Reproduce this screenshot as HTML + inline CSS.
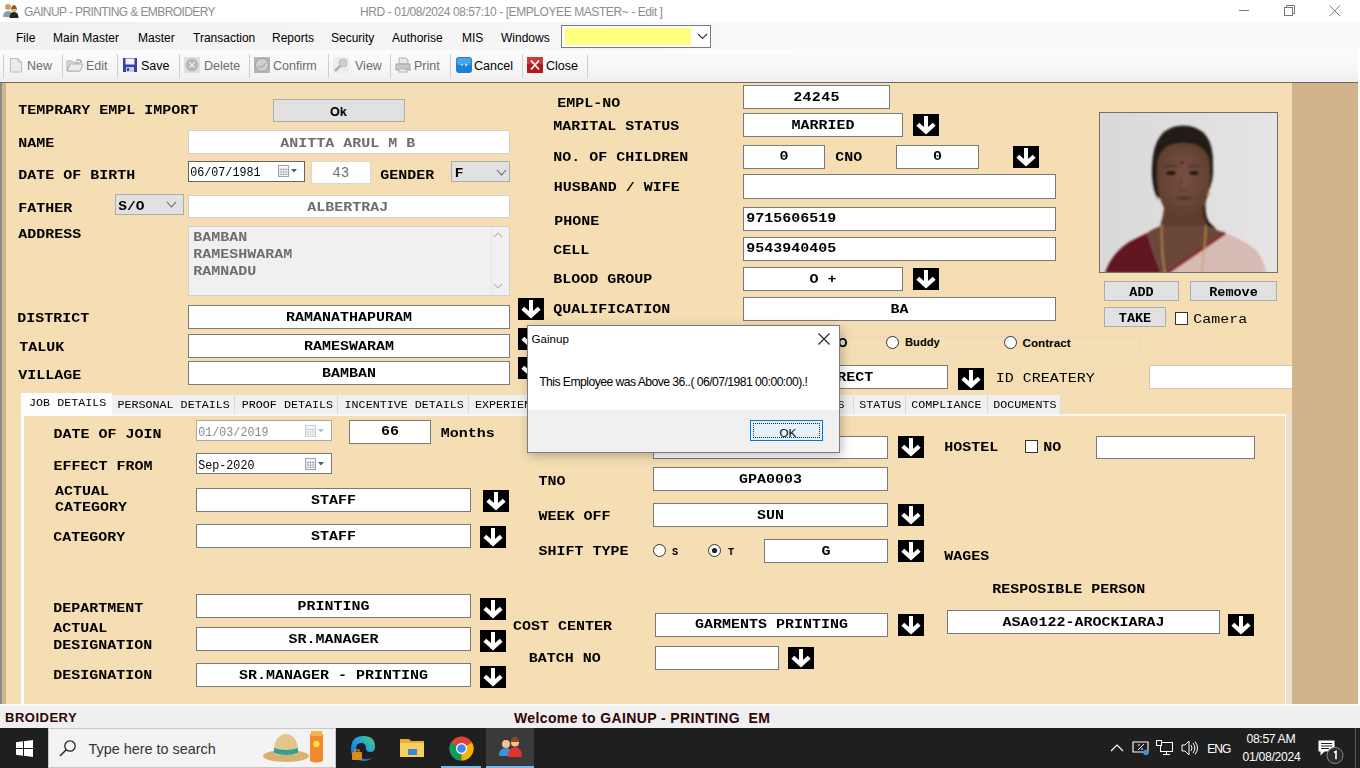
<!DOCTYPE html>
<html><head><meta charset="utf-8">
<style>
*{margin:0;padding:0;box-sizing:border-box}
html,body{width:1360px;height:768px;overflow:hidden;background:#fff;position:relative;font-family:"Liberation Sans",sans-serif}
.a{position:absolute}
.t{position:absolute;white-space:pre;line-height:1}
.ui{font-family:"Liberation Sans",sans-serif;font-size:12px}
.lb{position:absolute;white-space:pre;line-height:1;font-family:"Liberation Mono",monospace;font-weight:bold;font-size:15px;color:#000}
.in{position:absolute;background:#fff;border:1px solid #7a7a7a;white-space:pre;font-family:"Liberation Mono",monospace;font-weight:bold;font-size:13px;text-align:center;color:#000;overflow:hidden}
.arr{position:absolute;width:26px;height:22px;background:#000}
.arr svg{display:block}
.sep{position:absolute;top:54px;width:1px;height:24px;background:#d0d0d0}
</style></head><body>

<!-- title bar -->
<div class="a" style="left:0;top:0;width:1360px;height:22px;background:#fff"></div>
<div class="t ui" style="left:24px;top:6px;color:#8c8c8c;font-size:12px;letter-spacing:-0.6px">GAINUP - PRINTING &amp; EMBROIDERY</div>
<div class="t ui" style="left:360px;top:6px;color:#8c8c8c;font-size:12px;letter-spacing:-0.42px">HRD - 01/08/2024 08:57:10 - [EMPLOYEE MASTER~ - Edit ]</div>

<!-- menu bar -->
<div class="a" style="left:0;top:22px;width:1360px;height:28px;background:linear-gradient(90deg,#f1f1f1,#f9f9f9 60%,#fafafa)"></div>
<div class="t ui" style="left:16px;top:31.5px;color:#000">File</div>
<div class="t ui" style="left:53px;top:31.5px;color:#000">Main Master</div>
<div class="t ui" style="left:138px;top:31.5px;color:#000">Master</div>
<div class="t ui" style="left:193px;top:31.5px;color:#000">Transaction</div>
<div class="t ui" style="left:272px;top:31.5px;color:#000">Reports</div>
<div class="t ui" style="left:331px;top:31.5px;color:#000">Security</div>
<div class="t ui" style="left:392px;top:31.5px;color:#000">Authorise</div>
<div class="t ui" style="left:462px;top:31.5px;color:#000">MIS</div>
<div class="t ui" style="left:501px;top:31.5px;color:#000">Windows</div>
<div class="a" style="left:561px;top:25px;width:150px;height:23px;background:#fff;border:1px solid #7a7a7a"></div>
<div class="a" style="left:565px;top:28px;width:126px;height:17px;background:#ffff80"></div>
<svg class="a" style="left:697px;top:33px" width="11" height="7" viewBox="0 0 11 7"><path d="M1 1L5.5 5.5L10 1" fill="none" stroke="#333" stroke-width="1.1"/></svg>

<!-- toolbar -->
<div class="a" style="left:0;top:50px;width:1358px;height:32px;background:linear-gradient(#fcfcfc,#f6f6f6 60%,#eeeeee)"></div>
<div class="a" style="left:0;top:82px;width:1358px;height:1px;background:#6a6a6a"></div>
<div class="sep" style="left:3px"></div>
<div class="sep" style="left:62px"></div>
<div class="sep" style="left:117px"></div>
<div class="sep" style="left:179px"></div>
<div class="sep" style="left:249px"></div>
<div class="sep" style="left:328px"></div>
<div class="sep" style="left:390px"></div>
<div class="sep" style="left:450px"></div>
<div class="sep" style="left:522px"></div>
<div class="sep" style="left:587px"></div>
<!-- New icon -->
<svg class="a" style="left:9px;top:57px" width="14" height="16" viewBox="0 0 14 16"><path d="M1.5 1.5h7.5l3.5 3.5v10h-11z" fill="#ececec" stroke="#bdbdbd"/><path d="M9 1.5v3.5h3.5" fill="#d8d8d8" stroke="#bdbdbd"/></svg>
<div class="t ui" style="left:27px;top:60px;color:#6d6d6d;font-size:12.5px">New</div>
<!-- Edit icon -->
<svg class="a" style="left:66px;top:57px" width="18" height="16" viewBox="0 0 18 16"><path d="M1 4h5l1.5 1.5H13V14H1z" fill="#dcdcdc" stroke="#b0b0b0"/><path d="M1 14l3-7h13l-3 7z" fill="#ececec" stroke="#b0b0b0"/><path d="M10 3h4l1 1v2" fill="none" stroke="#a8a8a8" stroke-width="1.5"/></svg>
<div class="t ui" style="left:86px;top:60px;color:#6d6d6d;font-size:12.5px">Edit</div>
<!-- Save icon -->
<svg class="a" style="left:123px;top:58px" width="14" height="14" viewBox="0 0 14 14"><rect x="0" y="0" width="14" height="14" fill="#3a3fa8"/><rect x="2.5" y="0.5" width="9" height="6" fill="#f2f2f2"/><rect x="3" y="9" width="8" height="5" fill="#c8c8d8"/><rect x="4" y="10" width="2" height="3" fill="#3a3fa8"/></svg>
<div class="t ui" style="left:141px;top:60px;color:#000;font-size:12.5px">Save</div>
<!-- Delete icon -->
<svg class="a" style="left:184px;top:57px" width="16" height="16" viewBox="0 0 16 16"><rect width="16" height="16" fill="#e0e0e0"/><circle cx="8" cy="8" r="6.5" fill="#b8b8b8"/><path d="M5.5 5.5l5 5M10.5 5.5l-5 5" stroke="#eee" stroke-width="1.3"/></svg>
<div class="t ui" style="left:204px;top:60px;color:#6d6d6d;font-size:12.5px">Delete</div>
<!-- Confirm icon -->
<svg class="a" style="left:254px;top:57px" width="16" height="16" viewBox="0 0 16 16"><rect width="16" height="16" fill="#b4b4b4"/><circle cx="8" cy="8" r="6.5" fill="#cfcfcf" stroke="#a0a0a0"/><path d="M4 9q4 3 8-3" fill="none" stroke="#aaa" stroke-width="1.3"/></svg>
<div class="t ui" style="left:273px;top:60px;color:#6d6d6d;font-size:12.5px">Confirm</div>
<!-- View icon -->
<svg class="a" style="left:333px;top:57px" width="16" height="16" viewBox="0 0 16 16"><rect width="16" height="16" fill="#ececec"/><circle cx="10" cy="6" r="4" fill="#d0d0d0" stroke="#b8b8b8"/><path d="M7 9l-5 5" stroke="#b0b0b0" stroke-width="2.5"/></svg>
<div class="t ui" style="left:355px;top:60px;color:#6d6d6d;font-size:12.5px">View</div>
<!-- Print icon -->
<svg class="a" style="left:395px;top:57px" width="16" height="16" viewBox="0 0 16 16"><path d="M4 1h7l2 2v4H4z" fill="#e8e8e8" stroke="#b0b0b0"/><rect x="1" y="7" width="14" height="6" fill="#c8c8c8" stroke="#a8a8a8"/><rect x="4" y="12" width="8" height="3" fill="#eee" stroke="#b0b0b0"/></svg>
<div class="t ui" style="left:414px;top:60px;color:#6d6d6d;font-size:12.5px">Print</div>
<!-- Cancel icon -->
<svg class="a" style="left:456px;top:57px" width="16" height="16" viewBox="0 0 16 16"><rect x="0" y="0" width="16" height="16" rx="3" fill="#1f7fd0"/><rect x="1" y="1" width="14" height="7" rx="2" fill="#4aa6ea"/><path d="M5 8h2M9 7l2 1-2 1" stroke="#fff" stroke-width="1"/></svg>
<div class="t ui" style="left:474px;top:60px;color:#000;font-size:12.5px">Cancel</div>
<!-- Close icon -->
<svg class="a" style="left:527px;top:57px" width="16" height="16" viewBox="0 0 16 16"><rect width="16" height="16" fill="#b01c1c"/><rect x="0" y="0" width="16" height="7" fill="#cc3b3b"/><path d="M4 3.5l8 9M12 3.5l-8 9" stroke="#fff" stroke-width="1.6"/></svg>
<div class="t ui" style="left:546px;top:60px;color:#000;font-size:12.5px">Close</div>
<!-- window controls -->
<div class="a" style="left:1239px;top:10px;width:10px;height:1px;background:#777"></div>
<svg class="a" style="left:1284px;top:5px" width="12" height="12" viewBox="0 0 12 12"><rect x="0.5" y="2.5" width="8" height="8" fill="none" stroke="#777"/><path d="M2.5 2.5v-2h8v8h-2" fill="none" stroke="#777"/></svg>
<svg class="a" style="left:1329px;top:5px" width="12" height="12" viewBox="0 0 12 12"><path d="M0.5 0.5l10.5 10.5M11 0.5l-10.5 10.5" stroke="#777" stroke-width="1"/></svg>
<!-- app icon -->
<svg class="a" style="left:3px;top:3px" width="16" height="15" viewBox="0 0 16 15"><circle cx="5" cy="4" r="3" fill="#c9a36a"/><path d="M0 14q0-6 5-6t5 6z" fill="#8a9bb8"/><circle cx="11" cy="6.5" r="2.8" fill="#e3b572"/><path d="M6.5 15q0-6 4.5-6t4.5 6z" fill="#222"/><path d="M8 6q1-4 3-4t3 4" fill="#a0522d"/></svg>

<div class="a" style="left:0px;top:83px;width:1292px;height:621px;background:#f5deb3;"></div>
<div class="a" style="left:0px;top:83px;width:2px;height:621px;background:#8a8a8a;"></div>
<div class="a" style="left:2px;top:83px;width:4px;height:621px;background:#d2b48c;"></div>
<div class="a" style="left:1292px;top:83px;width:66px;height:621px;background:#d2b48c;"></div>
<div class="a" style="left:6px;top:90px;width:1286px;height:1px;background:#ece0c8;"></div>
<div class="t" style="left:18.30px;top:104.18px;font:bold 15px 'Liberation Mono';color:#000;transform:scaleY(0.82);transform-origin:0 0;">TEMPRARY EMPL IMPORT</div>
<div class="a" style="left:273px;top:99px;width:132px;height:23px;background:#e1e1e1;border:1px solid #adadad;"></div>
<div class="t" style="left:330px;top:104.88px;font:bold 12.5px 'Liberation Sans';color:#000;">Ok</div>
<div class="t" style="left:18.30px;top:137.48px;font:bold 15px 'Liberation Mono';color:#000;transform:scaleY(0.82);transform-origin:0 0;">NAME</div>
<div class="a" style="left:188px;top:130px;width:322px;height:24px;background:#fff;border:1px solid #d0d0d0;"></div>
<div class="t" style="left:280.30px;top:136.68px;font:bold 15px 'Liberation Mono';color:#6e6e6e;transform:scaleY(0.82);transform-origin:0 0;">ANITTA ARUL M B</div>
<div class="t" style="left:18.30px;top:169.48px;font:bold 15px 'Liberation Mono';color:#000;transform:scaleY(0.82);transform-origin:0 0;">DATE OF BIRTH</div>
<div class="a" style="left:188px;top:161px;width:117px;height:21px;background:#fff;border:1px solid #646464;"></div>
<div class="t" style="left:190.30px;top:165.48px;font:normal 11.7px 'Liberation Mono';color:#000;transform:scaleY(1.05);transform-origin:0 0;">06/07/1981</div>
<div class="a" style="left:311px;top:161px;width:60px;height:23px;background:#fff;border:1px solid #d8d8d8;"></div>
<div class="t" style="left:332.30px;top:164.57px;font:normal 14px 'Liberation Mono';color:#707070;transform:scaleY(1.0);transform-origin:0 0;">43</div>
<div class="t" style="left:380.30px;top:168.88px;font:bold 15px 'Liberation Mono';color:#000;transform:scaleY(0.82);transform-origin:0 0;">GENDER</div>
<div class="a" style="left:451px;top:161px;width:59px;height:21px;background:#e1e1e1;border:1px solid #adadad;"></div>
<div class="t" style="left:454.80px;top:166.98px;font:bold 14.5px 'Liberation Mono';color:#000;transform:scaleY(0.85);transform-origin:0 0;">F</div>
<div class="t" style="left:18.30px;top:202.18px;font:bold 15px 'Liberation Mono';color:#000;transform:scaleY(0.82);transform-origin:0 0;">FATHER</div>
<div class="a" style="left:115px;top:194px;width:69px;height:21px;background:#e1e1e1;border:1px solid #adadad;"></div>
<div class="t" style="left:118.30px;top:199.51px;font:bold 14.5px 'Liberation Mono';color:#000;transform:scaleY(0.82);transform-origin:0 0;">S/O</div>
<div class="a" style="left:188px;top:195px;width:322px;height:23px;background:#fff;border:1px solid #d0d0d0;"></div>
<div class="t" style="left:307.30px;top:200.68px;font:bold 15px 'Liberation Mono';color:#6e6e6e;transform:scaleY(0.82);transform-origin:0 0;">ALBERTRAJ</div>
<div class="t" style="left:18.30px;top:228.18px;font:bold 15px 'Liberation Mono';color:#000;transform:scaleY(0.82);transform-origin:0 0;">ADDRESS</div>
<div class="a" style="left:188px;top:226px;width:322px;height:70px;background:#f0f0f0;border:1px solid #d0d0d0;"></div>
<div class="t" style="left:193.30px;top:230.88px;font:bold 15px 'Liberation Mono';color:#6e6e6e;transform:scaleY(0.82);transform-origin:0 0;">BAMBAN</div>
<div class="t" style="left:193.30px;top:247.68px;font:bold 15px 'Liberation Mono';color:#6e6e6e;transform:scaleY(0.82);transform-origin:0 0;">RAMESHWARAM</div>
<div class="t" style="left:193.30px;top:264.68px;font:bold 15px 'Liberation Mono';color:#6e6e6e;transform:scaleY(0.82);transform-origin:0 0;">RAMNADU</div>
<div class="t" style="left:17.30px;top:311.78px;font:bold 15px 'Liberation Mono';color:#000;transform:scaleY(0.82);transform-origin:0 0;">DISTRICT</div>
<div class="a" style="left:188px;top:305px;width:322px;height:24px;background:#fff;border:1px solid #7a7a7a;"></div>
<div class="t" style="left:49px;width:600px;text-align:center;top:310.78px;font:bold 15px 'Liberation Mono';color:#000;transform:scaleY(0.82);transform-origin:0 0;">RAMANATHAPURAM</div>
<div class="t" style="left:19.30px;top:341.48px;font:bold 15px 'Liberation Mono';color:#000;transform:scaleY(0.82);transform-origin:0 0;">TALUK</div>
<div class="a" style="left:188px;top:334px;width:322px;height:24px;background:#fff;border:1px solid #7a7a7a;"></div>
<div class="t" style="left:49px;width:600px;text-align:center;top:339.68px;font:bold 15px 'Liberation Mono';color:#000;transform:scaleY(0.82);transform-origin:0 0;">RAMESWARAM</div>
<div class="t" style="left:18.30px;top:368.68px;font:bold 15px 'Liberation Mono';color:#000;transform:scaleY(0.82);transform-origin:0 0;">VILLAGE</div>
<div class="a" style="left:188px;top:361px;width:322px;height:24px;background:#fff;border:1px solid #7a7a7a;"></div>
<div class="t" style="left:49px;width:600px;text-align:center;top:366.68px;font:bold 15px 'Liberation Mono';color:#000;transform:scaleY(0.82);transform-origin:0 0;">BAMBAN</div>
<div class="a" style="left:518px;top:298px;width:26px;height:22px"><svg width="26" height="22" viewBox="0 0 26 22"><rect width="26" height="22" fill="#000"/><rect x="11" y="2" width="4" height="13" fill="#fff"/><path d="M4.8 10.2L13 17.6L21.2 10.2" fill="none" stroke="#fff" stroke-width="4.2" stroke-linejoin="miter" stroke-miterlimit="3"/></svg></div>
<div class="a" style="left:518px;top:328px;width:26px;height:22px"><svg width="26" height="22" viewBox="0 0 26 22"><rect width="26" height="22" fill="#000"/><rect x="11" y="2" width="4" height="13" fill="#fff"/><path d="M4.8 10.2L13 17.6L21.2 10.2" fill="none" stroke="#fff" stroke-width="4.2" stroke-linejoin="miter" stroke-miterlimit="3"/></svg></div>
<div class="a" style="left:518px;top:357px;width:26px;height:22px"><svg width="26" height="22" viewBox="0 0 26 22"><rect width="26" height="22" fill="#000"/><rect x="11" y="2" width="4" height="13" fill="#fff"/><path d="M4.8 10.2L13 17.6L21.2 10.2" fill="none" stroke="#fff" stroke-width="4.2" stroke-linejoin="miter" stroke-miterlimit="3"/></svg></div>
<svg class="a" style="left:496px;top:169px" width="11" height="7" viewBox="0 0 11 7"><path d="M1 1L5.5 6L10 1" fill="none" stroke="#606060" stroke-width="1.1"/></svg>
<svg class="a" style="left:166px;top:201px" width="11" height="7" viewBox="0 0 11 7"><path d="M1 1L5.5 6L10 1" fill="none" stroke="#606060" stroke-width="1.1"/></svg>
<svg class="a" style="left:278px;top:165px" width="22" height="12" viewBox="0 0 22 12"><rect x="0.5" y="0.5" width="10" height="11" fill="#f4f6f8" stroke="#9aa3b0"/><path d="M3 3v7M5.5 3v7M8 3v7M1 4.5h9M1 7h9M1 9.5h9" stroke="#9aa3b0" stroke-width=".6"/><path d="M13 4h6l-3 3.5z" fill="#4f5d73"/></svg>
<div class="a" style="left:491px;top:227px;width:1px;height:68px;background:#e4e4e4;"></div>
<svg class="a" style="left:492px;top:231px" width="12" height="8" viewBox="0 0 12 8"><path d="M2 6L6 2L10 6" fill="none" stroke="#b8b8b8" stroke-width="1.1"/></svg>
<svg class="a" style="left:492px;top:282px" width="12" height="8" viewBox="0 0 12 8"><path d="M2 2L6 6L10 2" fill="none" stroke="#b8b8b8" stroke-width="1.1"/></svg>
<div class="a" style="left:6px;top:90px;width:1286px;height:1px;background:#e9dfcc;"></div>
<div class="t" style="left:557.30px;top:97.38px;font:bold 15px 'Liberation Mono';color:#000;transform:scaleY(0.82);transform-origin:0 0;">EMPL-NO</div>
<div class="a" style="left:743px;top:85px;width:147px;height:24px;background:#fff;border:1px solid #7a7a7a;"></div>
<div class="t" style="left:516.5px;width:600px;text-align:center;top:89.70px;font:bold 15px 'Liberation Mono';color:#000;transform:scaleY(0.9);transform-origin:0 0;letter-spacing:0.3px;">24245</div>
<div class="t" style="left:553.30px;top:120.08px;font:bold 15px 'Liberation Mono';color:#000;transform:scaleY(0.82);transform-origin:0 0;">MARITAL STATUS</div>
<div class="a" style="left:743px;top:113px;width:160px;height:24px;background:#fff;border:1px solid #7a7a7a;"></div>
<div class="t" style="left:523px;width:600px;text-align:center;top:118.68px;font:bold 15px 'Liberation Mono';color:#000;transform:scaleY(0.82);transform-origin:0 0;">MARRIED</div>
<div class="a" style="left:913px;top:114px;width:26px;height:22px"><svg width="26" height="22" viewBox="0 0 26 22"><rect width="26" height="22" fill="#000"/><rect x="11" y="2" width="4" height="13" fill="#fff"/><path d="M4.8 10.2L13 17.6L21.2 10.2" fill="none" stroke="#fff" stroke-width="4.2" stroke-linejoin="miter" stroke-miterlimit="3"/></svg></div>
<div class="t" style="left:553.30px;top:151.18px;font:bold 15px 'Liberation Mono';color:#000;transform:scaleY(0.82);transform-origin:0 0;">NO. OF CHILDREN</div>
<div class="a" style="left:743px;top:145px;width:82px;height:24px;background:#fff;border:1px solid #7a7a7a;"></div>
<div class="t" style="left:484px;width:600px;text-align:center;top:150.15px;font:bold 15px 'Liberation Mono';color:#000;transform:scaleY(0.85);transform-origin:0 0;">0</div>
<div class="t" style="left:835.30px;top:151.18px;font:bold 15px 'Liberation Mono';color:#000;transform:scaleY(0.82);transform-origin:0 0;">CNO</div>
<div class="a" style="left:896px;top:145px;width:83px;height:24px;background:#fff;border:1px solid #7a7a7a;"></div>
<div class="t" style="left:637.5px;width:600px;text-align:center;top:150.15px;font:bold 15px 'Liberation Mono';color:#000;transform:scaleY(0.85);transform-origin:0 0;">0</div>
<div class="a" style="left:1013px;top:146px;width:26px;height:22px"><svg width="26" height="22" viewBox="0 0 26 22"><rect width="26" height="22" fill="#000"/><rect x="11" y="2" width="4" height="13" fill="#fff"/><path d="M4.8 10.2L13 17.6L21.2 10.2" fill="none" stroke="#fff" stroke-width="4.2" stroke-linejoin="miter" stroke-miterlimit="3"/></svg></div>
<div class="t" style="left:553.80px;top:181.18px;font:bold 15px 'Liberation Mono';color:#000;transform:scaleY(0.82);transform-origin:0 0;">HUSBAND / WIFE</div>
<div class="a" style="left:743px;top:174px;width:313px;height:25px;background:#fff;border:1px solid #7a7a7a;"></div>
<div class="t" style="left:554.30px;top:214.78px;font:bold 15px 'Liberation Mono';color:#000;transform:scaleY(0.82);transform-origin:0 0;">PHONE</div>
<div class="a" style="left:743px;top:207px;width:313px;height:24px;background:#fff;border:1px solid #7a7a7a;"></div>
<div class="t" style="left:746.30px;top:211.74px;font:bold 15px 'Liberation Mono';color:#000;transform:scaleY(0.86);transform-origin:0 0;">9715606519</div>
<div class="t" style="left:553.30px;top:244.48px;font:bold 15px 'Liberation Mono';color:#000;transform:scaleY(0.82);transform-origin:0 0;">CELL</div>
<div class="a" style="left:743px;top:237px;width:313px;height:24px;background:#fff;border:1px solid #7a7a7a;"></div>
<div class="t" style="left:746.30px;top:241.74px;font:bold 15px 'Liberation Mono';color:#000;transform:scaleY(0.86);transform-origin:0 0;">9543940405</div>
<div class="t" style="left:553.30px;top:273.38px;font:bold 15px 'Liberation Mono';color:#000;transform:scaleY(0.82);transform-origin:0 0;">BLOOD GROUP</div>
<div class="a" style="left:743px;top:267px;width:160px;height:24px;background:#fff;border:1px solid #7a7a7a;"></div>
<div class="t" style="left:523px;width:600px;text-align:center;top:272.78px;font:bold 15px 'Liberation Mono';color:#000;transform:scaleY(0.82);transform-origin:0 0;">O +</div>
<div class="a" style="left:913px;top:268px;width:26px;height:22px"><svg width="26" height="22" viewBox="0 0 26 22"><rect width="26" height="22" fill="#000"/><rect x="11" y="2" width="4" height="13" fill="#fff"/><path d="M4.8 10.2L13 17.6L21.2 10.2" fill="none" stroke="#fff" stroke-width="4.2" stroke-linejoin="miter" stroke-miterlimit="3"/></svg></div>
<div class="t" style="left:553.30px;top:303.08px;font:bold 15px 'Liberation Mono';color:#000;transform:scaleY(0.82);transform-origin:0 0;">QUALIFICATION</div>
<div class="a" style="left:743px;top:297px;width:313px;height:24px;background:#fff;border:1px solid #7a7a7a;"></div>
<div class="t" style="left:599.5px;width:600px;text-align:center;top:303.08px;font:bold 15px 'Liberation Mono';color:#000;transform:scaleY(0.82);transform-origin:0 0;">BA</div>
<div class="a" style="left:838px;top:336px;width:303px;height:22px;background:transparent;border:1px solid #e6dac4;"></div>
<div class="t" style="left:838px;top:336.42px;font:bold 12px 'Liberation Sans';color:#000;">O</div>
<svg class="a" style="left:886px;top:336px" width="13" height="13" viewBox="0 0 13 13"><circle cx="6.5" cy="6.5" r="6.0" fill="#fff" stroke="#333"/></svg>
<div class="t" style="left:905px;top:335.79px;font:bold 11.2px 'Liberation Sans';color:#000;">Buddy</div>
<svg class="a" style="left:1004px;top:336px" width="13" height="13" viewBox="0 0 13 13"><circle cx="6.5" cy="6.5" r="6.0" fill="#fff" stroke="#333"/></svg>
<div class="t" style="left:1022.5px;top:336.15px;font:bold 11.7px 'Liberation Sans';color:#000;">Contract</div>
<div class="a" style="left:780px;top:365px;width:168px;height:24px;background:#fff;border:1px solid #7a7a7a;"></div>
<div class="t" style="left:837.30px;top:370.68px;font:bold 15px 'Liberation Mono';color:#000;transform:scaleY(0.82);transform-origin:0 0;">RECT</div>
<div class="a" style="left:958px;top:368px;width:26px;height:22px"><svg width="26" height="22" viewBox="0 0 26 22"><rect width="26" height="22" fill="#000"/><rect x="11" y="2" width="4" height="13" fill="#fff"/><path d="M4.8 10.2L13 17.6L21.2 10.2" fill="none" stroke="#fff" stroke-width="4.2" stroke-linejoin="miter" stroke-miterlimit="3"/></svg></div>
<div class="t" style="left:995.80px;top:371.65px;font:normal 15px 'Liberation Mono';color:#000;transform:scaleY(0.85);transform-origin:0 0;">ID CREATERY</div>
<div class="a" style="left:1149px;top:365px;width:143px;height:24px;background:#fff;border:1px solid #d2c6b6;border-right:none;"></div>
<svg class="a" style="left:1099px;top:112px" width="179" height="161" viewBox="0 0 179 161">
<defs><filter id="bl" x="-20%" y="-20%" width="140%" height="140%"><feGaussianBlur stdDeviation="0.9"/></filter>
<linearGradient id="bg" x1="0" x2="1"><stop offset="0" stop-color="#d9d9d9"/><stop offset="1" stop-color="#e6e4e5"/></linearGradient>
<radialGradient id="fc" cx="0.5" cy="0.45" r="0.6"><stop offset="0" stop-color="#785242"/><stop offset="1" stop-color="#5c3c2e"/></radialGradient></defs>
<rect width="179" height="161" fill="url(#bg)"/>
<g filter="url(#bl)">
<path d="M57 84 Q52 70 53 55 Q54 14 84 13.5 Q116 14 114 55 Q115 70 108 82 Q104 100 110 110 Q115 115 118 118 L100 112 L98 90 L66 90z" fill="#241b17"/>
<path d="M66 80 Q66 105 58 122 L112 122 Q102 105 102 80z" fill="#5e3d2e"/>
<path d="M48 121 Q58 114 65 114 L105 114 Q116 117 126 121 L100 140 L70 161 L62 161 L54 140z" fill="#6a4737"/>
<path d="M58 56 Q58 31 84 31 Q111 31 111 56 Q112 80 105 94 Q95 106 84 106 Q72 106 64 94 Q57 80 58 56z" fill="url(#fc)"/>
<path d="M6 161 Q12 142 30 130 L48 121 L54 140 L62 161z" fill="#621820"/>
<path d="M70 161 L100 140 L126 121 Q140 126 156 137 Q165 147 167 161z" fill="#d6bab4"/>
<path d="M68 161 L100 139 L126 121" fill="none" stroke="#862430" stroke-width="3.2"/>
<path d="M63 113 Q62 140 66 161 M107 113 Q106 140 102 161" fill="none" stroke="#c9a24e" stroke-width="1.1"/>
<ellipse cx="72" cy="61" rx="5" ry="2.2" fill="#1c1210"/><ellipse cx="95" cy="61" rx="5" ry="2.2" fill="#1c1210"/>
<path d="M66 55 Q72 52 78 55 M89 55 Q95 52 101 55" stroke="#2a1a14" stroke-width="1" fill="none"/>
<circle cx="83" cy="51" r="1.4" fill="#3a0a0a"/>
<path d="M77 86 Q85 84 93 86 Q85 89 77 86z" fill="#4a2820"/>
<path d="M83 64 Q81 74 80 78 Q84 80 88 78" stroke="#4f3226" stroke-width="1" fill="none"/>
<circle cx="58" cy="86" r="1.5" fill="#c9a24e"/><circle cx="110" cy="82" r="1.5" fill="#c9a24e"/>
</g></svg>
<div class="a" style="left:1099px;top:112px;width:179px;height:161px;background:transparent;border:1px solid #6f6f6f;"></div>
<div class="a" style="left:1104px;top:281px;width:75px;height:20px;background:#e1e1e1;border:1px solid #adadad;"></div>
<div class="t" style="left:841.5px;width:600px;text-align:center;top:286.19px;font:bold 13.5px 'Liberation Mono';color:#000;transform:scaleY(0.9);transform-origin:0 0;">ADD</div>
<div class="a" style="left:1190px;top:281px;width:87px;height:20px;background:#e1e1e1;border:1px solid #adadad;"></div>
<div class="t" style="left:933.5px;width:600px;text-align:center;top:286.19px;font:bold 13.5px 'Liberation Mono';color:#000;transform:scaleY(0.9);transform-origin:0 0;">Remove</div>
<div class="a" style="left:1104px;top:307px;width:62px;height:20px;background:#e1e1e1;border:1px solid #adadad;"></div>
<div class="t" style="left:835px;width:600px;text-align:center;top:312.19px;font:bold 13.5px 'Liberation Mono';color:#000;transform:scaleY(0.9);transform-origin:0 0;">TAKE</div>
<div class="a" style="left:1175px;top:312px;width:13px;height:13px;background:#fff;border:1px solid #333;"></div>
<div class="t" style="left:1193.30px;top:312.65px;font:normal 15px 'Liberation Mono';color:#000;transform:scaleY(0.85);transform-origin:0 0;">Camera</div>
<div class="a" style="left:21px;top:415px;width:1271px;height:289px;background:#f5deb3;"></div>
<div class="a" style="left:21px;top:414px;width:1265px;height:2px;background:#fbf7ef;"></div>
<div class="a" style="left:21px;top:414px;width:3px;height:290px;background:#ffffff;"></div>
<div class="a" style="left:1285px;top:414px;width:1px;height:290px;background:#ffffff;"></div>
<div class="a" style="left:1286px;top:414px;width:1px;height:290px;background:#e0dcd4;"></div>
<div class="a" style="left:1287px;top:413px;width:5px;height:291px;background:#eee2cc;"></div>
<div class="a" style="left:112px;top:395px;width:123px;height:19px;background:#f0f0f0;"></div>
<div class="a" style="left:234px;top:395px;width:1px;height:19px;background:#dadada;"></div>
<div class="t" style="left:117.50px;top:398.46px;font:normal 11.7px 'Liberation Mono';color:#000;transform:scaleY(0.95);transform-origin:0 0;">PERSONAL DETAILS</div>
<div class="a" style="left:235px;top:395px;width:103px;height:19px;background:#f0f0f0;"></div>
<div class="a" style="left:337px;top:395px;width:1px;height:19px;background:#dadada;"></div>
<div class="t" style="left:241.80px;top:398.46px;font:normal 11.7px 'Liberation Mono';color:#000;transform:scaleY(0.95);transform-origin:0 0;">PROOF DETAILS</div>
<div class="a" style="left:338px;top:395px;width:131px;height:19px;background:#f0f0f0;"></div>
<div class="a" style="left:468px;top:395px;width:1px;height:19px;background:#dadada;"></div>
<div class="t" style="left:344.60px;top:398.46px;font:normal 11.7px 'Liberation Mono';color:#000;transform:scaleY(0.95);transform-origin:0 0;">INCENTIVE DETAILS</div>
<div class="a" style="left:469px;top:395px;width:91px;height:19px;background:#f0f0f0;"></div>
<div class="a" style="left:559px;top:395px;width:1px;height:19px;background:#dadada;"></div>
<div class="t" style="left:474.90px;top:398.46px;font:normal 11.7px 'Liberation Mono';color:#000;transform:scaleY(0.95);transform-origin:0 0;">EXPERIENCE</div>
<div class="a" style="left:800px;top:395px;width:54px;height:19px;background:#f0f0f0;"></div>
<div class="a" style="left:853px;top:395px;width:1px;height:19px;background:#dadada;"></div>
<div class="t" style="left:795.30px;top:398.46px;font:normal 11.7px 'Liberation Mono';color:#000;transform:scaleY(0.95);transform-origin:0 0;">DETAILS</div>
<div class="a" style="left:854px;top:395px;width:52px;height:19px;background:#f0f0f0;"></div>
<div class="a" style="left:905px;top:395px;width:1px;height:19px;background:#dadada;"></div>
<div class="t" style="left:859.30px;top:398.46px;font:normal 11.7px 'Liberation Mono';color:#000;transform:scaleY(0.95);transform-origin:0 0;">STATUS</div>
<div class="a" style="left:906px;top:395px;width:82px;height:19px;background:#f0f0f0;"></div>
<div class="a" style="left:987px;top:395px;width:1px;height:19px;background:#dadada;"></div>
<div class="t" style="left:911.30px;top:398.46px;font:normal 11.7px 'Liberation Mono';color:#000;transform:scaleY(0.95);transform-origin:0 0;">COMPLIANCE</div>
<div class="a" style="left:988px;top:395px;width:73px;height:19px;background:#f0f0f0;"></div>
<div class="a" style="left:1060px;top:395px;width:1px;height:19px;background:#dadada;"></div>
<div class="t" style="left:993.30px;top:398.46px;font:normal 11.7px 'Liberation Mono';color:#000;transform:scaleY(0.95);transform-origin:0 0;">DOCUMENTS</div>
<div class="a" style="left:21px;top:393px;width:91px;height:23px;background:#fdfdfd;"></div>
<div class="t" style="left:29.10px;top:396.46px;font:normal 11.7px 'Liberation Mono';color:#000;transform:scaleY(0.95);transform-origin:0 0;">JOB DETAILS</div>
<div class="t" style="left:53.50px;top:427.88px;font:bold 15px 'Liberation Mono';color:#000;transform:scaleY(0.82);transform-origin:0 0;">DATE OF JOIN</div>
<div class="a" style="left:196px;top:420px;width:136px;height:21px;background:#fff;border:1px solid #a8a8a8;"></div>
<div class="t" style="left:198.30px;top:424.98px;font:normal 11.7px 'Liberation Mono';color:#8a8a8a;transform:scaleY(1.05);transform-origin:0 0;">01/03/2019</div>
<svg class="a" style="left:305px;top:425px" width="22" height="12" viewBox="0 0 22 12"><rect x="0.5" y="0.5" width="10" height="11" fill="#f4f6f8" stroke="#c8ccd4"/><path d="M3 3v7M5.5 3v7M8 3v7M1 4.5h9M1 7h9M1 9.5h9" stroke="#c8ccd4" stroke-width=".6"/><path d="M13 4h6l-3 3.5z" fill="#b8bcc4"/></svg>
<div class="a" style="left:349px;top:420px;width:82px;height:24px;background:#fff;border:1px solid #7a7a7a;"></div>
<div class="t" style="left:90px;width:600px;text-align:center;top:425.28px;font:bold 15px 'Liberation Mono';color:#000;transform:scaleY(0.82);transform-origin:0 0;">66</div>
<div class="t" style="left:440.70px;top:427.38px;font:bold 15px 'Liberation Mono';color:#000;transform:scaleY(0.82);transform-origin:0 0;">Months</div>
<div class="t" style="left:53.50px;top:460.18px;font:bold 15px 'Liberation Mono';color:#000;transform:scaleY(0.82);transform-origin:0 0;">EFFECT FROM</div>
<div class="a" style="left:196px;top:453px;width:136px;height:21px;background:#fff;border:1px solid #7a7a7a;"></div>
<div class="t" style="left:198.30px;top:457.88px;font:normal 11.7px 'Liberation Mono';color:#000;transform:scaleY(1.05);transform-origin:0 0;">Sep-2020</div>
<svg class="a" style="left:305px;top:458px" width="22" height="12" viewBox="0 0 22 12"><rect x="0.5" y="0.5" width="10" height="11" fill="#f4f6f8" stroke="#9aa3b0"/><path d="M3 3v7M5.5 3v7M8 3v7M1 4.5h9M1 7h9M1 9.5h9" stroke="#9aa3b0" stroke-width=".6"/><path d="M13 4h6l-3 3.5z" fill="#4f5d73"/></svg>
<div class="t" style="left:54.90px;top:484.98px;font:bold 15px 'Liberation Mono';color:#000;transform:scaleY(0.82);transform-origin:0 0;">ACTUAL</div>
<div class="t" style="left:54.90px;top:501.48px;font:bold 15px 'Liberation Mono';color:#000;transform:scaleY(0.82);transform-origin:0 0;">CATEGORY</div>
<div class="a" style="left:196px;top:488px;width:275px;height:24px;background:#fff;border:1px solid #7a7a7a;"></div>
<div class="t" style="left:33.5px;width:600px;text-align:center;top:494.48px;font:bold 15px 'Liberation Mono';color:#000;transform:scaleY(0.82);transform-origin:0 0;">STAFF</div>
<div class="a" style="left:483px;top:490px;width:26px;height:22px"><svg width="26" height="22" viewBox="0 0 26 22"><rect width="26" height="22" fill="#000"/><rect x="11" y="2" width="4" height="13" fill="#fff"/><path d="M4.8 10.2L13 17.6L21.2 10.2" fill="none" stroke="#fff" stroke-width="4.2" stroke-linejoin="miter" stroke-miterlimit="3"/></svg></div>
<div class="t" style="left:53.30px;top:530.68px;font:bold 15px 'Liberation Mono';color:#000;transform:scaleY(0.82);transform-origin:0 0;">CATEGORY</div>
<div class="a" style="left:196px;top:524px;width:275px;height:24px;background:#fff;border:1px solid #7a7a7a;"></div>
<div class="t" style="left:33.5px;width:600px;text-align:center;top:530.28px;font:bold 15px 'Liberation Mono';color:#000;transform:scaleY(0.82);transform-origin:0 0;">STAFF</div>
<div class="a" style="left:480px;top:526px;width:26px;height:22px"><svg width="26" height="22" viewBox="0 0 26 22"><rect width="26" height="22" fill="#000"/><rect x="11" y="2" width="4" height="13" fill="#fff"/><path d="M4.8 10.2L13 17.6L21.2 10.2" fill="none" stroke="#fff" stroke-width="4.2" stroke-linejoin="miter" stroke-miterlimit="3"/></svg></div>
<div class="t" style="left:53.30px;top:601.88px;font:bold 15px 'Liberation Mono';color:#000;transform:scaleY(0.82);transform-origin:0 0;">DEPARTMENT</div>
<div class="a" style="left:196px;top:594px;width:275px;height:24px;background:#fff;border:1px solid #7a7a7a;"></div>
<div class="t" style="left:33.5px;width:600px;text-align:center;top:599.78px;font:bold 15px 'Liberation Mono';color:#000;transform:scaleY(0.82);transform-origin:0 0;">PRINTING</div>
<div class="a" style="left:480px;top:598px;width:26px;height:22px"><svg width="26" height="22" viewBox="0 0 26 22"><rect width="26" height="22" fill="#000"/><rect x="11" y="2" width="4" height="13" fill="#fff"/><path d="M4.8 10.2L13 17.6L21.2 10.2" fill="none" stroke="#fff" stroke-width="4.2" stroke-linejoin="miter" stroke-miterlimit="3"/></svg></div>
<div class="t" style="left:53.30px;top:622.08px;font:bold 15px 'Liberation Mono';color:#000;transform:scaleY(0.82);transform-origin:0 0;">ACTUAL</div>
<div class="t" style="left:53.30px;top:638.58px;font:bold 15px 'Liberation Mono';color:#000;transform:scaleY(0.82);transform-origin:0 0;">DESIGNATION</div>
<div class="a" style="left:196px;top:627px;width:275px;height:24px;background:#fff;border:1px solid #7a7a7a;"></div>
<div class="t" style="left:33.5px;width:600px;text-align:center;top:632.78px;font:bold 15px 'Liberation Mono';color:#000;transform:scaleY(0.82);transform-origin:0 0;">SR.MANAGER</div>
<div class="a" style="left:480px;top:630px;width:26px;height:22px"><svg width="26" height="22" viewBox="0 0 26 22"><rect width="26" height="22" fill="#000"/><rect x="11" y="2" width="4" height="13" fill="#fff"/><path d="M4.8 10.2L13 17.6L21.2 10.2" fill="none" stroke="#fff" stroke-width="4.2" stroke-linejoin="miter" stroke-miterlimit="3"/></svg></div>
<div class="t" style="left:53.30px;top:669.38px;font:bold 15px 'Liberation Mono';color:#000;transform:scaleY(0.82);transform-origin:0 0;">DESIGNATION</div>
<div class="a" style="left:196px;top:663px;width:275px;height:24px;background:#fff;border:1px solid #7a7a7a;"></div>
<div class="t" style="left:33.5px;width:600px;text-align:center;top:668.58px;font:bold 15px 'Liberation Mono';color:#000;transform:scaleY(0.82);transform-origin:0 0;">SR.MANAGER - PRINTING</div>
<div class="a" style="left:480px;top:666px;width:26px;height:22px"><svg width="26" height="22" viewBox="0 0 26 22"><rect width="26" height="22" fill="#000"/><rect x="11" y="2" width="4" height="13" fill="#fff"/><path d="M4.8 10.2L13 17.6L21.2 10.2" fill="none" stroke="#fff" stroke-width="4.2" stroke-linejoin="miter" stroke-miterlimit="3"/></svg></div>
<div class="a" style="left:653px;top:436px;width:235px;height:23px;background:#fff;border:1px solid #7a7a7a;"></div>
<div class="a" style="left:898px;top:436px;width:26px;height:22px"><svg width="26" height="22" viewBox="0 0 26 22"><rect width="26" height="22" fill="#000"/><rect x="11" y="2" width="4" height="13" fill="#fff"/><path d="M4.8 10.2L13 17.6L21.2 10.2" fill="none" stroke="#fff" stroke-width="4.2" stroke-linejoin="miter" stroke-miterlimit="3"/></svg></div>
<div class="t" style="left:944.30px;top:441.18px;font:bold 15px 'Liberation Mono';color:#000;transform:scaleY(0.82);transform-origin:0 0;">HOSTEL</div>
<div class="a" style="left:1025px;top:440px;width:13px;height:13px;background:#fff;border:1px solid #333;"></div>
<div class="t" style="left:1043.30px;top:440.78px;font:bold 15px 'Liberation Mono';color:#000;transform:scaleY(0.82);transform-origin:0 0;">NO</div>
<div class="a" style="left:1096px;top:436px;width:159px;height:23px;background:#fff;border:1px solid #7a7a7a;"></div>
<div class="t" style="left:538.60px;top:474.88px;font:bold 15px 'Liberation Mono';color:#000;transform:scaleY(0.82);transform-origin:0 0;">TNO</div>
<div class="a" style="left:653px;top:467px;width:235px;height:24px;background:#fff;border:1px solid #7a7a7a;"></div>
<div class="t" style="left:470.5px;width:600px;text-align:center;top:472.68px;font:bold 15px 'Liberation Mono';color:#000;transform:scaleY(0.82);transform-origin:0 0;">GPA0003</div>
<div class="t" style="left:538.60px;top:509.88px;font:bold 15px 'Liberation Mono';color:#000;transform:scaleY(0.82);transform-origin:0 0;">WEEK OFF</div>
<div class="a" style="left:653px;top:503px;width:235px;height:24px;background:#fff;border:1px solid #7a7a7a;"></div>
<div class="t" style="left:470.5px;width:600px;text-align:center;top:508.78px;font:bold 15px 'Liberation Mono';color:#000;transform:scaleY(0.82);transform-origin:0 0;">SUN</div>
<div class="a" style="left:898px;top:504px;width:26px;height:22px"><svg width="26" height="22" viewBox="0 0 26 22"><rect width="26" height="22" fill="#000"/><rect x="11" y="2" width="4" height="13" fill="#fff"/><path d="M4.8 10.2L13 17.6L21.2 10.2" fill="none" stroke="#fff" stroke-width="4.2" stroke-linejoin="miter" stroke-miterlimit="3"/></svg></div>
<div class="t" style="left:538.60px;top:545.48px;font:bold 15px 'Liberation Mono';color:#000;transform:scaleY(0.82);transform-origin:0 0;">SHIFT TYPE</div>
<svg class="a" style="left:653px;top:544px" width="13" height="13" viewBox="0 0 13 13"><circle cx="6.5" cy="6.5" r="6.0" fill="#fff" stroke="#333"/></svg>
<div class="t" style="left:672.10px;top:546.83px;font:bold 10px 'Liberation Mono';color:#000;transform:scaleY(1.0);transform-origin:0 0;">S</div>
<svg class="a" style="left:708px;top:544px" width="13" height="13" viewBox="0 0 13 13"><circle cx="6.5" cy="6.5" r="6.0" fill="#fff" stroke="#333"/><circle cx="6.5" cy="6.5" r="2.6" fill="#222"/></svg>
<div class="t" style="left:728.00px;top:546.83px;font:bold 10px 'Liberation Mono';color:#000;transform:scaleY(1.0);transform-origin:0 0;">T</div>
<div class="a" style="left:764px;top:539px;width:124px;height:24px;background:#fff;border:1px solid #7a7a7a;"></div>
<div class="t" style="left:526px;width:600px;text-align:center;top:545.48px;font:bold 15px 'Liberation Mono';color:#000;transform:scaleY(0.82);transform-origin:0 0;">G</div>
<div class="a" style="left:898px;top:540px;width:26px;height:22px"><svg width="26" height="22" viewBox="0 0 26 22"><rect width="26" height="22" fill="#000"/><rect x="11" y="2" width="4" height="13" fill="#fff"/><path d="M4.8 10.2L13 17.6L21.2 10.2" fill="none" stroke="#fff" stroke-width="4.2" stroke-linejoin="miter" stroke-miterlimit="3"/></svg></div>
<div class="t" style="left:944.30px;top:549.58px;font:bold 15px 'Liberation Mono';color:#000;transform:scaleY(0.82);transform-origin:0 0;">WAGES</div>
<div class="t" style="left:992.30px;top:583.48px;font:bold 15px 'Liberation Mono';color:#000;transform:scaleY(0.82);transform-origin:0 0;">RESPOSIBLE PERSON</div>
<div class="t" style="left:512.90px;top:620.18px;font:bold 15px 'Liberation Mono';color:#000;transform:scaleY(0.82);transform-origin:0 0;">COST CENTER</div>
<div class="a" style="left:655px;top:613px;width:233px;height:24px;background:#fff;border:1px solid #7a7a7a;"></div>
<div class="t" style="left:471.5px;width:600px;text-align:center;top:618.28px;font:bold 15px 'Liberation Mono';color:#000;transform:scaleY(0.82);transform-origin:0 0;">GARMENTS PRINTING</div>
<div class="a" style="left:898px;top:614px;width:26px;height:22px"><svg width="26" height="22" viewBox="0 0 26 22"><rect width="26" height="22" fill="#000"/><rect x="11" y="2" width="4" height="13" fill="#fff"/><path d="M4.8 10.2L13 17.6L21.2 10.2" fill="none" stroke="#fff" stroke-width="4.2" stroke-linejoin="miter" stroke-miterlimit="3"/></svg></div>
<div class="t" style="left:528.70px;top:651.78px;font:bold 15px 'Liberation Mono';color:#000;transform:scaleY(0.82);transform-origin:0 0;">BATCH NO</div>
<div class="a" style="left:655px;top:646px;width:124px;height:24px;background:#fff;border:1px solid #7a7a7a;"></div>
<div class="a" style="left:788px;top:647px;width:26px;height:22px"><svg width="26" height="22" viewBox="0 0 26 22"><rect width="26" height="22" fill="#000"/><rect x="11" y="2" width="4" height="13" fill="#fff"/><path d="M4.8 10.2L13 17.6L21.2 10.2" fill="none" stroke="#fff" stroke-width="4.2" stroke-linejoin="miter" stroke-miterlimit="3"/></svg></div>
<div class="a" style="left:947px;top:610px;width:273px;height:24px;background:#fff;border:1px solid #7a7a7a;"></div>
<div class="t" style="left:783.5px;width:600px;text-align:center;top:615.58px;font:bold 15px 'Liberation Mono';color:#000;transform:scaleY(0.82);transform-origin:0 0;">ASA0122-AROCKIARAJ</div>
<div class="a" style="left:1228px;top:614px;width:26px;height:22px"><svg width="26" height="22" viewBox="0 0 26 22"><rect width="26" height="22" fill="#000"/><rect x="11" y="2" width="4" height="13" fill="#fff"/><path d="M4.8 10.2L13 17.6L21.2 10.2" fill="none" stroke="#fff" stroke-width="4.2" stroke-linejoin="miter" stroke-miterlimit="3"/></svg></div>
<div class="a" style="left:527px;top:325px;width:313px;height:128px;background:#fff;border:1px solid #7c7c7c;box-shadow:2px 3px 10px rgba(0,0,0,.25)"></div>
<div class="a" style="left:528px;top:410px;width:311px;height:42px;background:#f0f0f0;"></div>
<div class="t" style="left:531.5px;top:332.16px;font:normal 11.6px 'Liberation Sans';color:#000;">Gainup</div>
<svg class="a" style="left:818px;top:333px" width="12" height="12" viewBox="0 0 12 12"><path d="M0.5 0.5l11 11M11.5 0.5l-11 11" stroke="#222" stroke-width="1.1"/></svg>
<div class="t" style="left:539.2px;top:375.30px;font:normal 12.2px 'Liberation Sans';color:#000;letter-spacing:-0.55px;">This Employee was Above 36..( 06/07/1981 00:00:00).!</div>
<div class="a" style="left:750px;top:420px;width:73px;height:21px;background:#e5f1fb;border:1px solid #0078d7"></div>
<div class="a" style="left:753px;top:423px;width:67px;height:15px;border:1px dotted #222"></div>
<div class="t" style="left:779.5px;top:425.76px;font:normal 11.6px 'Liberation Sans';color:#000;">OK</div>
<div class="a" style="left:0px;top:704px;width:1360px;height:24px;background:#efefef;"></div>
<div class="a" style="left:0px;top:704px;width:1360px;height:2px;background:#fafafa;"></div>
<div class="t" style="left:5px;top:709.63px;font:bold 13px 'Liberation Sans';color:#2e0404;letter-spacing:0.5px;">BROIDERY</div>
<div class="t" style="left:514px;top:709.54px;font:bold 14px 'Liberation Sans';color:#2e0404;letter-spacing:0.37px;">Welcome to GAINUP - PRINTING  EM</div>
<div class="a" style="left:0px;top:728px;width:1360px;height:40px;background:#1f1f1f;"></div>
<svg class="a" style="left:16px;top:740px" width="17" height="17" viewBox="0 0 17 17"><path d="M0 2.3L7 1.3V8H0zM8 1.2L17 0V8H8zM0 9h7v6.7L0 14.7zM8 9h9v8L8 15.8z" fill="#fff"/></svg>
<div class="a" style="left:48px;top:728px;width:288px;height:40px;background:#f3f3f3;border:1px solid #c8c8c8;"></div>
<svg class="a" style="left:59px;top:740px" width="18" height="17" viewBox="0 0 18 17"><circle cx="11" cy="6" r="5.2" fill="none" stroke="#222" stroke-width="1.3"/><path d="M7.2 9.8L1 16" stroke="#222" stroke-width="1.5"/></svg>
<div class="t" style="left:88.5px;top:741.00px;font:normal 14.4px 'Liberation Sans';color:#333;">Type here to search</div>
<svg class="a" style="left:262px;top:731px" width="64" height="34" viewBox="0 0 64 34"><ellipse cx="24" cy="25" rx="23" ry="6" fill="#d9b070"/><path d="M12 24 Q11 4 24 3 Q37 4 36 24z" fill="#e6c48e"/><path d="M12 17 Q24 21 36 17 L36 22 Q24 26 12 22z" fill="#2ea394"/><path d="M48 3h13v27q-6.5 3-13 0z" fill="#f08a2a"/><rect x="49" y="0" width="11" height="5" fill="#f6b04a"/><circle cx="54.5" cy="13" r="3.2" fill="#ffd54a"/></svg>
<svg class="a" style="left:350px;top:735px" width="26" height="27" viewBox="0 0 26 27"><defs><linearGradient id="eg" x1="0" y1="1" x2="1" y2="0"><stop offset="0" stop-color="#1565c0"/><stop offset=".5" stop-color="#1e9be0"/><stop offset="1" stop-color="#4fd07a"/></linearGradient></defs><path d="M1 14 Q1 1 13.5 1 Q25 1 25 12 Q25 17 20 17 Q16 17 16 13 Q16 8 11 8 Q6 8 6 14 Q6 22 14 24 Q19 25 23 22 Q19 26 13 26 Q1 25 1 14z" fill="url(#eg)"/><rect x="2" y="17" width="10" height="8" rx="1" fill="#d98b1a"/><rect x="5" y="15" width="4" height="3" fill="none" stroke="#d98b1a" stroke-width="1.2"/><rect x="6" y="20" width="2" height="1.5" fill="#fff3"/></svg>
<svg class="a" style="left:400px;top:737px" width="24" height="20" viewBox="0 0 24 20"><path d="M0 2h9l2 2h13v16H0z" fill="#e8b030"/><path d="M0 6h24v14H0z" fill="#f8d060"/><rect x="8" y="12" width="9" height="6" fill="#3a86d8"/></svg>
<svg class="a" style="left:449px;top:736px" width="25" height="25" viewBox="0 0 25 25"><circle cx="12.5" cy="12.5" r="12" fill="#db4437"/><path d="M12.5 12.5L2.1 6.5A12 12 0 0 0 12.5 24.5z" fill="#0f9d58"/><path d="M12.5 12.5L22.9 6.5A12 12 0 0 1 12.5 24.5z" fill="#f4b400"/><circle cx="12.5" cy="12.5" r="5.5" fill="#fff"/><circle cx="12.5" cy="12.5" r="4.3" fill="#4285f4"/></svg>
<div class="a" style="left:441px;top:766px;width:40px;height:2px;background:#76b9ed;"></div>
<div class="a" style="left:486px;top:728px;width:48px;height:40px;background:#3a3a3a;"></div>
<div class="a" style="left:486px;top:766px;width:48px;height:2px;background:#76b9ed;"></div>
<svg class="a" style="left:498px;top:736px" width="25" height="23" viewBox="0 0 25 23"><circle cx="8" cy="8" r="4" fill="#f2c48a"/><path d="M1 20 Q1 12 8 12 Q14 12 14 20z" fill="#3d8fe0"/><circle cx="17" cy="6.5" r="4" fill="#f2c48a"/><path d="M13 6 Q13 1 17 1 Q21 1 21 6z" fill="#8a4a20"/><path d="M10 21 Q10 11 17 11 Q24 11 24 21z" fill="#e03030"/></svg>
<svg class="a" style="left:1110px;top:744px" width="14" height="8" viewBox="0 0 14 8"><path d="M1 7L7 1L13 7" fill="none" stroke="#fff" stroke-width="1.2"/></svg>
<svg class="a" style="left:1132px;top:739px" width="18" height="17" viewBox="0 0 18 17"><path d="M1 3h15v10H1z" fill="none" stroke="#fff" stroke-width="1.1"/><path d="M6 11l6-6M6 6h2M11 10h-2" stroke="#fff" stroke-width="1"/><circle cx="14" cy="13.5" r="2.8" fill="#3c8fd8"/></svg>
<svg class="a" style="left:1156px;top:740px" width="18" height="16" viewBox="0 0 18 16"><rect x="4.5" y="2.5" width="12" height="9" fill="none" stroke="#fff"/><rect x="0.5" y="0.5" width="5" height="5" fill="#1f1f1f" stroke="#fff"/><path d="M10.5 11.5v3M7 14.5h7" stroke="#fff"/></svg>
<svg class="a" style="left:1181px;top:740px" width="17" height="16" viewBox="0 0 17 16"><path d="M1 5h3l4-4v14l-4-4H1z" fill="none" stroke="#fff"/><path d="M10 5q2 3 0 6M12 3q3.5 5 0 10M14 1.5q5 6.5 0 13" fill="none" stroke="#fff"/></svg>
<div class="t" style="left:1207.2px;top:742.02px;font:normal 12px 'Liberation Sans';color:#fff;letter-spacing:-0.9px;">ENG</div>
<div class="t" style="left:1246.5px;top:732.20px;font:normal 12.2px 'Liberation Sans';color:#fff;letter-spacing:-0.35px;">08:57 AM</div>
<div class="t" style="left:1242.5px;top:749.70px;font:normal 12.2px 'Liberation Sans';color:#fff;letter-spacing:-0.3px;">01/08/2024</div>
<svg class="a" style="left:1318px;top:740px" width="27" height="26" viewBox="0 0 27 26"><path d="M0.5 0.5h16v11h-10l-4 4v-4h-2z" fill="#fff"/><path d="M3 3.5h11M3 6h11M3 8.5h8" stroke="#1f1f1f" stroke-width="1.1"/><circle cx="17" cy="15.5" r="8" fill="#2b2b2b" stroke="#888" stroke-width="1"/><path d="M16 12.5l2-1.2v8" fill="none" stroke="#fff" stroke-width="1.6"/></svg>
<div class="a" style="left:1355px;top:728px;width:1px;height:40px;background:#5a5a5a;"></div>
</body></html>
